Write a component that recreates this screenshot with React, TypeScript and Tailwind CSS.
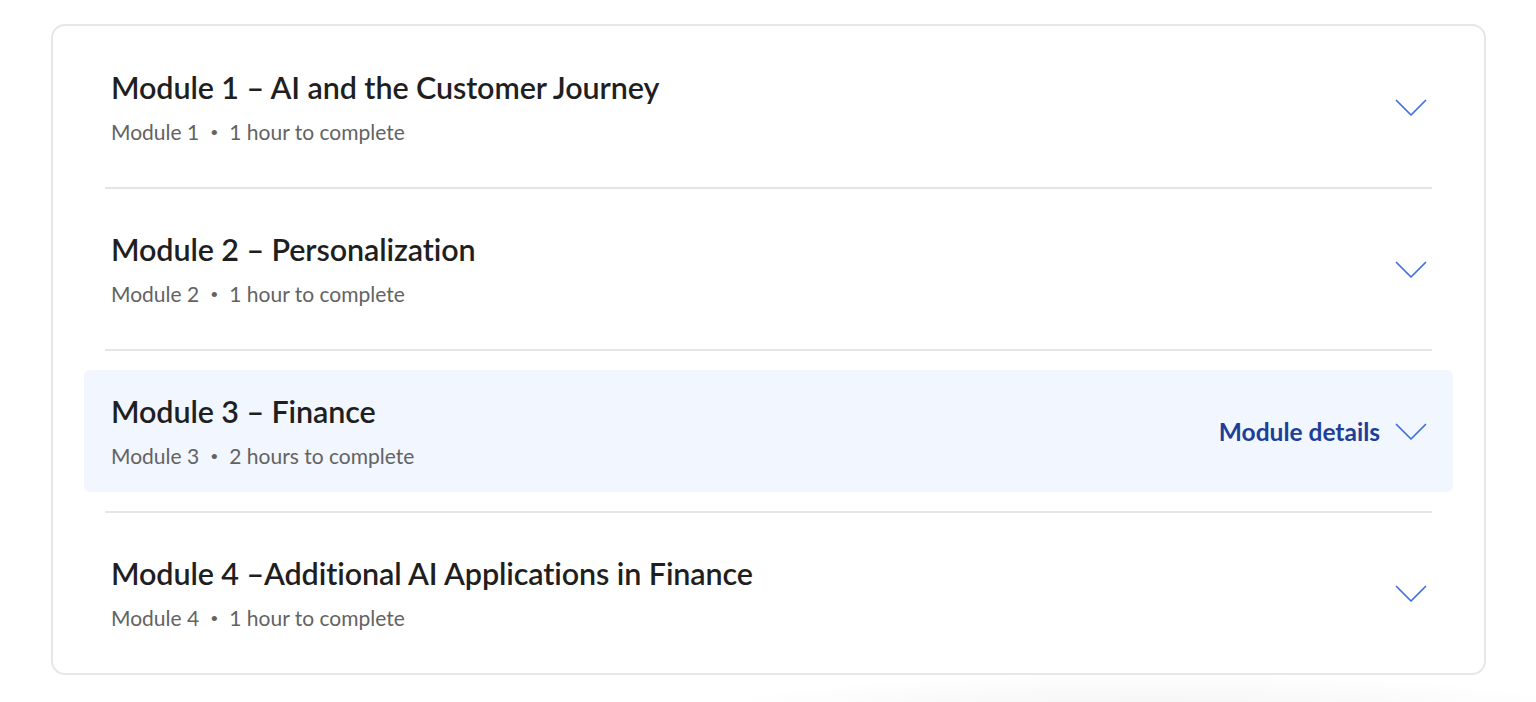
import React from "react";

const modules = [
  { title: "Module 1 – AI and the Customer Journey", sub: "Module 1", time: "1 hour to complete", active: false },
  { title: "Module 2 – Personalization", sub: "Module 2", time: "1 hour to complete", active: false },
  { title: "Module 3 – Finance", sub: "Module 3", time: "2 hours to complete", active: true },
  { title: "Module 4 –Additional AI Applications in Finance", sub: "Module 4", time: "1 hour to complete", active: false },
];

function Chevron() {
  return (
    <svg width="32" height="18" viewBox="0 0 32 18" fill="none" className="shrink-0">
      <path d="M1.5 1.5 L16 16 L30.5 1.5" stroke="#3f6fdc" strokeWidth="1.7" strokeLinecap="round" strokeLinejoin="round" />
    </svg>
  );
}

export default function App() {
  return (
    <div className="w-[1536px] h-[702px] bg-white overflow-hidden relative" style={{ fontFamily: "Lato, 'Noto Sans', sans-serif" }}>
      <div className="absolute left-[700px] top-[672px] w-[900px] h-[80px] rounded-full bg-[radial-gradient(ellipse_at_center,#f3f3f3_0%,#ffffff_70%)]" />
      <div className="relative ml-[51px] mt-[24px] w-[1435px] h-[651px] border-2 border-[#e5e7e8] rounded-[14px] bg-white px-[31px] pt-[20px]">
        {modules.map((m, i) => (
          <div key={i}>
            {i > 0 && <div className="mx-[21px] my-[19px] h-[2px] bg-[#e3e5e6]" />}
            <div className={`h-[122px] rounded-md flex items-center justify-between pl-[27px] pr-[26px] ${m.active ? "bg-[#f2f6fe]" : ""}`}>
              <div className="flex flex-col">
                <div className="text-[30.5px] leading-[36px] font-semibold text-[#1f1f1f] tracking-[-0.1px]">{m.title}</div>
                <div className="mt-[13px] text-[21px] leading-[28px] text-[#636363] flex items-center">
                  <span>{m.sub}</span>
                  <span className="mx-[11px] text-[14px]">•</span>
                  <span>{m.time}</span>
                </div>
              </div>
              <div className="flex items-center gap-[15px] mt-[2px]">
                {m.active && <span className="text-[24.5px] font-bold text-[#1d3f9a]">Module details</span>}
                <Chevron />
              </div>
            </div>
          </div>
        ))}
      </div>
    </div>
  );
}
